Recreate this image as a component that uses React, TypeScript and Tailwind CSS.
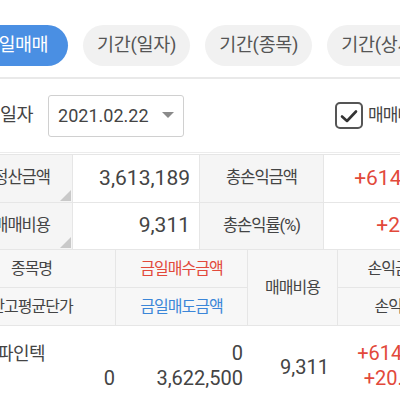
import React from "react";

const FONT = "font-['Roboto','Noto_Sans_CJK_KR',sans-serif]";

const Corner = () => (
  <span className="absolute bottom-[1px] right-[1px] h-0 w-0 border-b-[11px] border-l-[11px] border-b-[#c9c9c9] border-l-transparent" />
);

const TabBar = () => (
  <div className="flex h-[79px] items-start gap-[15px] border-b-2 border-[#e9e9e9] pt-[25px]">
    <div className="-ml-[38px] flex h-[41px] shrink-0 items-center rounded-full bg-[#4a8fe3] px-[20px] text-[18.5px] tracking-[-0.5px] text-white">
      금일매매
    </div>
    {["기간(일자)", "기간(종목)", "기간(상세)"].map((t) => (
      <div
        key={t}
        className="flex h-[41px] shrink-0 items-center rounded-full bg-[#f1f1f1] px-[14px] text-[18.5px] tracking-[-0.3px] text-[#555]"
      >
        {t}
      </div>
    ))}
  </div>
);

const FilterRow = () => (
  <div className="flex h-[74px] items-center border-b border-[#ececec]">
    <span className="-ml-[33px] shrink-0 text-[18.5px] tracking-[-0.5px] text-[#444]">매매일자</span>
    <div className="ml-[15px] flex h-[42px] w-[136px] shrink-0 items-center justify-between rounded-[3px] border border-[#d0d0d0] pl-[9px] pr-[9px]">
      <span className="text-[18px] text-[#444]">2021.02.22</span>
      <svg width="12" height="7" viewBox="0 0 12 7">
        <polygon points="0,0 12,0 6,6" fill="#8a8a8a" />
      </svg>
    </div>
    <div className="ml-[151px] flex h-[27px] w-[28px] shrink-0 items-center justify-center rounded-[5px] border-2 border-[#555]">
      <svg width="18" height="14" viewBox="0 0 18 14">
        <path d="M2 7.5 L7 12 L16 2.5" fill="none" stroke="#333" strokeWidth="2.6" strokeLinecap="round" strokeLinejoin="round" />
      </svg>
    </div>
    <span className="ml-[5px] shrink-0 text-[17px] tracking-[-1px] text-[#444]">매매내역</span>
  </div>
);

const Summary = () => (
  <div className="-ml-[43px] mt-[1px] grid w-[493px] grid-cols-[116px_127px_124px_126px] border-t border-[#e6e6e6] text-[#444]">
    <div className="relative flex h-[48px] items-center justify-center border-b border-r border-[#e6e6e6] bg-[#f5f5f5] text-[16.5px] tracking-[-1px]">
      총정산금액
      <Corner />
    </div>
    <div className="flex h-[48px] items-center justify-end border-b border-r border-[#e6e6e6] pr-[9px] text-[21px]">3,613,189</div>
    <div className="flex h-[48px] items-center justify-center border-b border-r border-[#e6e6e6] bg-[#f5f5f5] text-[16.5px] tracking-[-1px]">총손익금액</div>
    <div className="flex h-[48px] items-center justify-end border-b border-[#e6e6e6] pr-[9px] text-[21px] text-[#e2493b]">+614,189</div>

    <div className="relative flex h-[47px] items-center justify-center border-b border-r border-[#e6e6e6] bg-[#f5f5f5] text-[16.5px] tracking-[-1px]">
      총매매비용
      <Corner />
    </div>
    <div className="flex h-[47px] items-center justify-end border-b border-r border-[#e6e6e6] pr-[9px] text-[21px]">9,311</div>
    <div className="flex h-[47px] items-center justify-center border-b border-r border-[#e6e6e6] bg-[#f5f5f5] text-[16.5px] tracking-[-1px]">총손익률(%)</div>
    <div className="flex h-[47px] items-center justify-end border-b border-[#e6e6e6] pr-[9px] text-[21px] text-[#e2493b]">+20.46</div>
  </div>
);

const DetailTable = () => (
  <div className="-ml-[52px] w-[504px] text-[#444]">
    <div className="grid grid-cols-[168px_132px_90px_114px] grid-rows-[38px_37px] border-b border-[#e6e6e6] bg-[#f7f7f7] text-[16px] tracking-[-1px]">
      <div className="flex items-center justify-center border-b border-r border-[#e6e6e6]">종목명</div>
      <div className="flex items-center justify-center border-b border-r border-[#e6e6e6] text-[#e2493b]">금일매수금액</div>
      <div className="row-span-2 flex items-center justify-center border-r border-[#e6e6e6]">매매비용</div>
      <div className="flex items-center justify-center border-b border-[#e6e6e6]">손익금액</div>
      <div className="flex items-center justify-center border-r border-[#e6e6e6]">잔고평균단가</div>
      <div className="flex items-center justify-center border-r border-[#e6e6e6] text-[#3b86d8]">금일매도금액</div>
      <div className="flex items-center justify-center">손익률</div>
    </div>
    <div className="grid grid-cols-[168px_132px_90px_114px] pt-[15px] text-[20px] leading-[25px]">
      <div className="flex flex-col pr-[1px]">
        <span className="pl-[49px] text-[18px] tracking-[-0.5px]">파인텍</span>
        <span className="self-end">0</span>
      </div>
      <div className="flex flex-col items-end pr-[5px]">
        <span>0</span>
        <span>3,622,500</span>
      </div>
      <div className="flex items-center justify-end pt-[2px] pr-[9px]">9,311</div>
      <div className="flex flex-col items-end pr-[12px] text-[#e2493b]">
        <span>+614,189</span>
        <span>+20.46%</span>
      </div>
    </div>
  </div>
);

export default function App() {
  return (
    <div className={`h-[400px] w-[400px] overflow-hidden bg-white ${FONT}`}>
      <TabBar />
      <FilterRow />
      <Summary />
      <DetailTable />
    </div>
  );
}
